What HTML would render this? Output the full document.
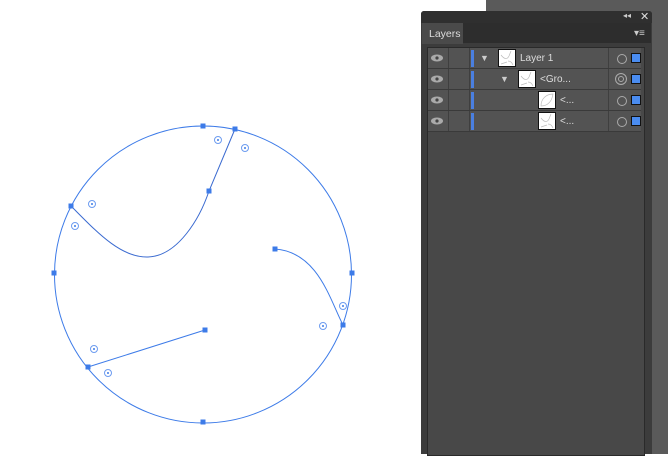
<!DOCTYPE html>
<html><head><meta charset="utf-8"><style>
body{margin:0;width:668px;height:454px;overflow:hidden;background:#fff;position:relative;font-family:"Liberation Sans",sans-serif}
.abs{position:absolute}
.row{position:absolute;left:428px;width:213px;height:20px;background:#535353;border-bottom:1px solid #3a3a3a}
.eye{position:absolute;left:0;top:0;width:20px;height:20px;border-right:1px solid #3f3f3f}
.lock{position:absolute;left:21px;top:0;width:20px;height:20px;border-right:1px solid #3f3f3f}
.bar{position:absolute;left:43px;top:2px;width:3px;height:17px;background:#4a7fe0}
.thumb{position:absolute;width:16px;height:16px;background:#fff;border:1px solid #111;top:1px}
.thumb svg{position:absolute;left:0;top:0}
.circ{position:absolute;left:189px;top:6px;width:8px;height:8px;border:1px solid #aaa;border-radius:50%}
.sq{position:absolute;left:203px;top:5px;width:8px;height:8px;background:#4a8cf0;border:1px solid #111}
.vr{position:absolute;left:180px;top:0;width:1px;height:20px;background:#3f3f3f}
.t{position:absolute;color:#ddd;font-size:10px;top:5px}
</style></head><body>
<svg class="abs" style="left:0;top:0" width="420" height="454">
<g fill="none" stroke="#3d7be8" stroke-width="1">
<circle cx="203" cy="274.5" r="148.5"/>
<path d="M71,206 C95,230 120,258 148,257 C178,256 200,218 209,191 L235,129" stroke="#3a6ad0"/>
<path d="M275,249 C318,252 330,300 343,325"/>
<path d="M88,367 L205,330"/>
</g>
<g fill="#3d7be8">
<rect x="200.5" y="123.5" width="5" height="5"/><rect x="51.5" y="270.5" width="5" height="5"/>
<rect x="349.5" y="270.5" width="5" height="5"/><rect x="200.5" y="419.5" width="5" height="5"/>
<rect x="232.5" y="126.5" width="5" height="5"/><rect x="206.5" y="188.5" width="5" height="5"/>
<rect x="68.5" y="203.5" width="5" height="5"/><rect x="272.5" y="246.5" width="5" height="5"/>
<rect x="340.5" y="322.5" width="5" height="5"/><rect x="85.5" y="364.5" width="5" height="5"/>
<rect x="202.5" y="327.5" width="5" height="5"/>
</g>
<g fill="none" stroke="#6d9cf0" stroke-width="1">
<circle cx="218" cy="140" r="3.5"/><circle cx="245" cy="148" r="3.5"/><circle cx="92" cy="204" r="3.5"/>
<circle cx="75" cy="226" r="3.5"/><circle cx="343" cy="306" r="3.5"/><circle cx="323" cy="326" r="3.5"/>
<circle cx="94" cy="349" r="3.5"/><circle cx="108" cy="373" r="3.5"/>
</g>
<g fill="#3d7be8">
<circle cx="218" cy="140" r="1"/><circle cx="245" cy="148" r="1"/><circle cx="92" cy="204" r="1"/>
<circle cx="75" cy="226" r="1"/><circle cx="343" cy="306" r="1"/><circle cx="323" cy="326" r="1"/>
<circle cx="94" cy="349" r="1"/><circle cx="108" cy="373" r="1"/>
</g>
</svg>
<div class="abs" style="left:486px;top:0;width:182px;height:454px;background:#5a5a5a"></div>
<div class="abs" style="left:421px;top:11px;width:231px;height:443px;background:#3c3c3c;border-radius:3px 3px 0 0"></div>
<div class="abs" style="left:421px;top:11px;width:231px;height:12px;background:#2f2f2f;border-radius:3px 3px 0 0"></div>
<div class="abs" style="left:623px;top:11px;color:#ccc;font-size:8px">◂◂</div>
<div class="abs" style="left:640px;top:10px;color:#ddd;font-size:11px">✕</div>
<div class="abs" style="left:422px;top:23px;width:229px;height:20px;background:#2d2d2d"></div>
<div class="abs" style="left:422px;top:23px;width:41px;height:21px;background:#4a4a4a;color:#ddd;font-size:10.5px;line-height:23px;text-indent:7px">Layers</div>
<div class="abs" style="left:634px;top:28px;color:#ccc;font-size:10px">▾≡</div>
<div class="abs" style="left:427px;top:47px;width:216px;height:407px;background:#484848;border:1px solid #2a2a2a"></div>
<div class="row" style="top:48px"><div class="eye"></div><div class="lock"></div><div class="bar"></div><div class="t" style="left:52px;top:5px;font-size:9px;color:#ccc">▼</div><div class="thumb" style="left:70px"><svg width="16" height="16" fill="none" stroke="#bbb" stroke-width=".7"><path d="M2,5 C5,9 8,10 10,6 L12,1 M9,11 C12,11 13,13 14,15 M2,14 L8,12"/></svg></div><div class="t" style="left:92px">Layer 1</div><div class="vr"></div><div class="circ"></div><div class="sq"></div></div>
<div class="row" style="top:69px"><div class="eye"></div><div class="lock"></div><div class="bar"></div><div class="t" style="left:72px;font-size:9px;color:#ccc">▼</div><div class="thumb" style="left:90px"><svg width="16" height="16" fill="none" stroke="#bbb" stroke-width=".7"><path d="M2,5 C5,9 8,10 10,6 L12,1 M9,11 C12,11 13,13 14,15 M2,14 L8,12"/></svg></div><div class="t" style="left:112px">&lt;Gro...</div><div class="vr"></div><div class="circ" style="left:187px;top:4px;width:10px;height:10px;box-shadow:inset 0 0 0 2px #535353,inset 0 0 0 3px #aaa"></div><div class="sq"></div></div>
<div class="row" style="top:90px"><div class="eye"></div><div class="lock"></div><div class="bar"></div><div class="thumb" style="left:110px"><svg width="16" height="16" fill="none" stroke="#bbb" stroke-width=".7"><path d="M2,14 C2,7 7,2 14,2 C13,9 9,14 2,14 Z"/></svg></div><div class="t" style="left:132px">&lt;...</div><div class="vr"></div><div class="circ"></div><div class="sq"></div></div>
<div class="row" style="top:111px"><div class="eye"></div><div class="lock"></div><div class="bar"></div><div class="thumb" style="left:110px"><svg width="16" height="16" fill="none" stroke="#bbb" stroke-width=".7"><path d="M2,5 C5,9 8,10 10,6 L12,1 M9,11 C12,11 13,13 14,15 M2,14 L8,12"/></svg></div><div class="t" style="left:132px">&lt;...</div><div class="vr"></div><div class="circ"></div><div class="sq"></div></div>
<svg class="abs" style="left:428px;top:48px" width="20" height="84">
<g fill="#aaa"><ellipse cx="9" cy="10" rx="6" ry="3.5"/><ellipse cx="9" cy="31" rx="6" ry="3.5"/><ellipse cx="9" cy="52" rx="6" ry="3.5"/><ellipse cx="9" cy="73" rx="6" ry="3.5"/></g>
<g fill="#444"><circle cx="9" cy="10" r="1.6"/><circle cx="9" cy="31" r="1.6"/><circle cx="9" cy="52" r="1.6"/><circle cx="9" cy="73" r="1.6"/></g>
</svg>
</body></html>
